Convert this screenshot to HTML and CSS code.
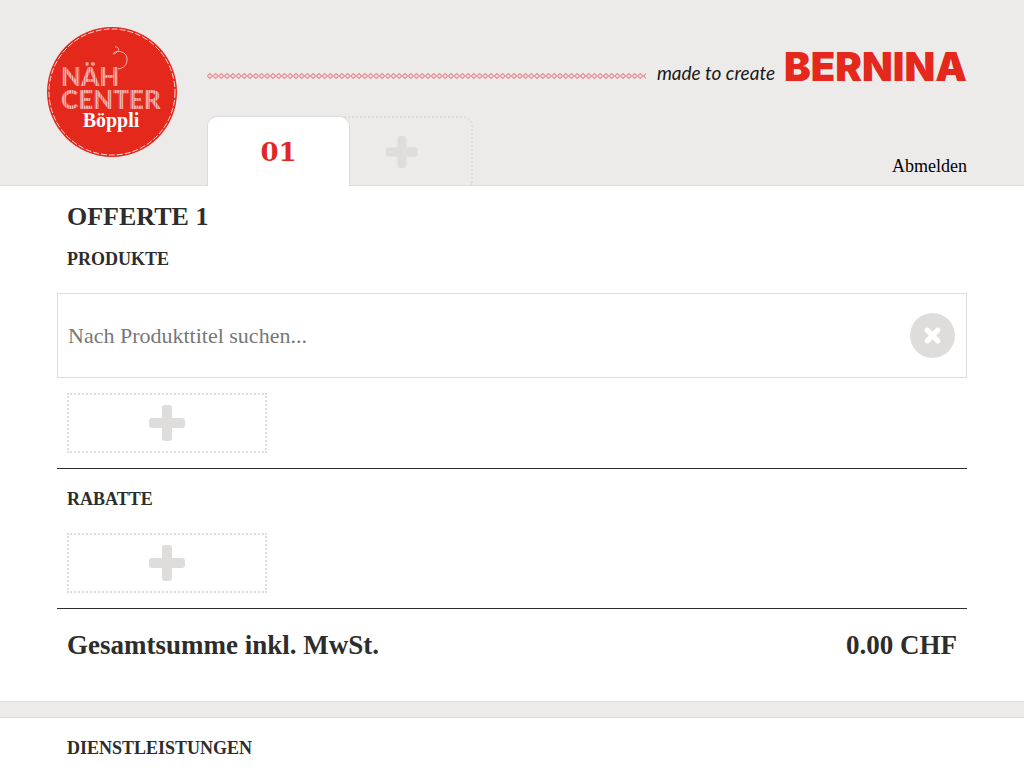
FILE: index.html
```html
<!DOCTYPE html>
<html lang="de">
<head>
    <meta charset="utf-8">
    <meta name="viewport" content="width=device-width, initial-scale=1">
    <title>Offerte</title>
    <link rel="stylesheet" href="styles.css">
</head>
<body>
    <header class="header">
        <svg class="logo" viewBox="0 0 130 130" role="img" aria-label="Näh Center Böppli">
            <defs>
                <pattern id="stripes" width="2.4" height="4" patternUnits="userSpaceOnUse">
                    <rect width="2.4" height="4" fill="#f7b5b0"/>
                    <rect width="0.8" height="4" fill="#ea6058"/>
                </pattern>
            </defs>
            <circle cx="65" cy="65" r="65" fill="#e4281c"/>
            <circle cx="65" cy="65" r="63" fill="none" stroke="#fbdcda" stroke-width="1" stroke-dasharray="6 2"/>
            <path d="M68 20C71 19 73 23 70 25C66 29 65 26 68 25C75 23 80 27 80 32C80 38 77 41 71 42" fill="none" stroke="#f7b5b0" stroke-width="1"/>
            <text class="logo-name" x="14" y="59" fill="url(#stripes)">NÄH</text>
            <text class="logo-name" x="14" y="82" fill="url(#stripes)">CENTER</text>
            <text class="logo-owner" x="64" y="100" text-anchor="middle">Böppli</text>
        </svg>
        <div class="header-main">
            <div class="brand">
                <svg class="stitch" aria-hidden="true">
                    <defs>
                        <pattern id="stitch" width="5.74" height="8" patternUnits="userSpaceOnUse">
                            <path d="M0.4 4L2.87 1.5L5.34 4L2.87 6.5Z" fill="none" stroke="#e5404a" stroke-width="0.9"/>
                        </pattern>
                    </defs>
                    <rect width="100%" height="8" fill="url(#stitch)"/>
                </svg>
                <span class="claim">made to create</span>
                <span class="bernina">BERNINA</span>
            </div>
            <nav class="nav">
                <button class="tab active" type="button">01</button>
                <button class="tab tab-add" type="button" aria-label="Neue Offerte">
                    <svg class="plus" viewBox="0 0 36 36"><path d="M16 0h4q3 0 3 3v10h10q3 0 3 3v4q0 3-3 3h-10v10q0 3-3 3h-4q-3 0-3-3v-10h-10q-3 0-3-3v-4q0-3 3-3h10v-10q0-3 3-3z"/></svg>
                </button>
                <a class="logout" href="#">Abmelden</a>
            </nav>
        </div>
    </header>

    <main>
        <section class="offer">
            <h1>Offerte 1</h1>
            <div class="group">
                <h2>Produkte</h2>
                <div class="search">
                    <input type="text" placeholder="Nach Produkttitel suchen..." aria-label="Nach Produkttitel suchen">
                    <button class="remove" type="button" aria-label="Entfernen">
                        <svg viewBox="0 0 18 18"><path d="M4 4l10 10M14 4L4 14"/></svg>
                    </button>
                </div>
                <button class="add" type="button" aria-label="Produkt hinzufügen">
                    <svg class="plus" viewBox="0 0 36 36"><path d="M16 0h4q3 0 3 3v10h10q3 0 3 3v4q0 3-3 3h-10v10q0 3-3 3h-4q-3 0-3-3v-10h-10q-3 0-3-3v-4q0-3 3-3h10v-10q0-3 3-3z"/></svg>
                </button>
            </div>
            <div class="group">
                <h2>Rabatte</h2>
                <button class="add" type="button" aria-label="Rabatt hinzufügen">
                    <svg class="plus" viewBox="0 0 36 36"><path d="M16 0h4q3 0 3 3v10h10q3 0 3 3v4q0 3-3 3h-10v10q0 3-3 3h-4q-3 0-3-3v-10h-10q-3 0-3-3v-4q0-3 3-3h10v-10q0-3 3-3z"/></svg>
                </button>
            </div>
            <div class="total">
                <span>Gesamtsumme inkl. MwSt.</span>
                <span>0.00 CHF</span>
            </div>
        </section>
        <div class="divider"></div>
        <section class="services">
            <h2>Dienstleistungen</h2>
        </section>
    </main>
</body>
</html>
```
FILE: styles.css
```css
* {
    box-sizing: border-box;
}
body {
    margin: 0;
    background: #fff;
    color: #2d2d2c;
    font-family: Georgia, "Liberation Serif", serif;
}
button {
    padding: 0;
    font-family: inherit;
    cursor: pointer;
}
h1, h2 {
    margin: 0;
    padding: 0 10px;
    text-transform: uppercase;
}
h1 {
    font-size: 26px;
    line-height: 32px;
}
h2 {
    font-size: 18px;
    line-height: 20px;
}

/* header */
.header {
    display: flex;
    gap: 30px;
    padding: 27px 57px 0 47px;
    background: #edeaea;
    border-bottom: 1px solid #dedbdb;
}
.logo {
    flex: none;
    width: 130px;
    height: 130px;
    margin-bottom: 28px;
}
.logo-name {
    font: 900 26px Lato, sans-serif;
}
.logo-owner {
    font: bold 20px "Liberation Serif", serif;
    fill: #fff;
}
.header-main {
    flex: 1;
    display: flex;
    flex-direction: column;
    justify-content: space-between;
}
.brand {
    display: flex;
    align-items: center;
    padding-top: 20px;
}
.stitch {
    flex: 1;
    min-width: 0;
    height: 8px;
    margin: 17px 11px 0 0;
}
.claim {
    padding-top: 12px;
    margin-right: 9px;
    color: #1a1a1a;
    font: italic 19px/24px Lato, sans-serif;
    white-space: nowrap;
}
.bernina {
    color: #e4281c;
    font: 900 40px/40px Inter, sans-serif;
}
.nav {
    display: flex;
    margin-bottom: -1px;
}
.tab {
    width: 143px;
    height: 70px;
    border-radius: 10px 10px 0 0;
}
.tab.active {
    position: relative;
    z-index: 1;
    background: #fff;
    border: 1px solid #dedbdb;
    border-bottom: 0;
    color: #e02826;
    font: bold 26px "DejaVu Serif", serif;
}
.tab-add {
    height: 69px;
    margin-left: -20px;
    background: none;
    border: 2px dotted #dfdcdc;
    border-bottom: 0;
}
.plus {
    display: block;
    width: 36px;
    height: 36px;
    margin: 0 auto;
    fill: #dfdcdc;
}
.tab-add .plus {
    width: 32px;
    height: 32px;
}
.logout {
    align-self: flex-end;
    margin: 0 0 10px auto;
    color: #000;
    font-size: 18px;
    line-height: 20px;
    text-decoration: none;
}

/* offer */
.offer {
    padding: 15px 57px 40px;
}
.group {
    padding: 20px 0 15px;
    border-bottom: 1px solid #2d2d2c;
}
h1 + .group {
    padding-top: 16px;
}
.search {
    display: flex;
    align-items: center;
    height: 85px;
    margin: 24px 0 -9px;
    padding: 0 11px 0 10px;
    border: 1px solid #dedbdb;
}
.search input {
    flex: 1;
    min-width: 0;
    padding: 0;
    border: 0;
    outline: 0;
    background: none;
    color: #2d2d2c;
    font: 22px/28px Georgia, "Liberation Serif", serif;
}
.search input::placeholder {
    color: #777;
}
.remove {
    display: flex;
    align-items: center;
    justify-content: center;
    width: 45px;
    height: 45px;
    border: 0;
    border-radius: 50%;
    background: #dfdcdc;
}
.remove svg {
    width: 19px;
    height: 19px;
    fill: none;
    stroke: #fff;
    stroke-width: 5;
    stroke-linecap: round;
}
.add {
    display: block;
    width: 200px;
    height: 60px;
    margin: 24px 10px 0;
    background: none;
    border: 2px dotted #dfdcdc;
}
.total {
    display: flex;
    justify-content: space-between;
    padding: 20px 10px 0;
    font-size: 27px;
    font-weight: bold;
    line-height: 32px;
}

.divider {
    height: 17px;
    background: #edeaea;
    border: solid #dedbdb;
    border-width: 1px 0;
}

/* services */
.services {
    padding: 20px 57px;
}
```
